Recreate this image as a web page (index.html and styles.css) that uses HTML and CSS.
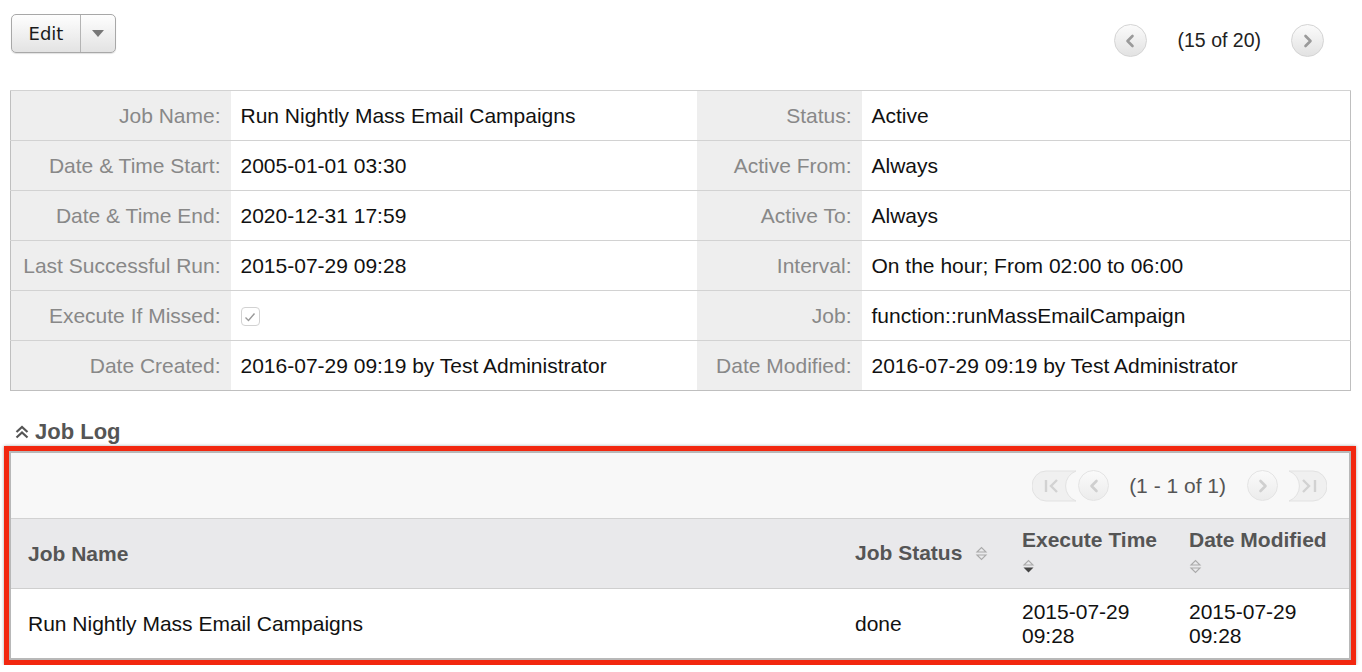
FILE: index.html
```html
<!DOCTYPE html>
<html lang="en">
<head>
	<meta charset="UTF-8">
	<title>Scheduler - Run Nightly Mass Email Campaigns</title>
	<link rel="stylesheet" href="styles.css">
</head>
<body>
	<!--toolbar: action button + record pager-->
	<div class="toolbar">
		<div class="btn-group">
			<span class="btn-main">Edit</span>
			<span class="btn-caret"><span class="caret"></span></span>
		</div>
		<div class="pager">
			<span class="circle-btn">
				<svg width="12" height="14" viewBox="0 0 12 14"><path d="M8.5 2 L3.5 7 L8.5 12" fill="none" stroke="#9a9a9a" stroke-width="2.6" stroke-linecap="round" stroke-linejoin="round"/></svg>
			</span>
			<span class="count">(15 of 20)</span>
			<span class="circle-btn">
				<svg width="12" height="14" viewBox="0 0 12 14"><path d="M3.5 2 L8.5 7 L3.5 12" fill="none" stroke="#9a9a9a" stroke-width="2.6" stroke-linecap="round" stroke-linejoin="round"/></svg>
			</span>
		</div>
	</div>

	<!--detail view-->
	<table class="detail">
		<colgroup>
			<col class="c-label1"><col class="c-value1"><col class="c-label2"><col class="c-value2">
		</colgroup>
		<tr>
			<td class="label">Job Name:</td><td>Run Nightly Mass Email Campaigns</td>
			<td class="label">Status:</td><td>Active</td>
		</tr>
		<tr>
			<td class="label">Date &amp; Time Start:</td><td>2005-01-01 03:30</td>
			<td class="label">Active From:</td><td>Always</td>
		</tr>
		<tr>
			<td class="label">Date &amp; Time End:</td><td>2020-12-31 17:59</td>
			<td class="label">Active To:</td><td>Always</td>
		</tr>
		<tr>
			<td class="label">Last Successful Run:</td><td>2015-07-29 09:28</td>
			<td class="label">Interval:</td><td>On the hour; From 02:00 to 06:00</td>
		</tr>
		<tr>
			<td class="label">Execute If Missed:</td>
			<td><span class="checkbox"><svg width="12" height="10" viewBox="0 0 12 10"><path d="M1.5 5.5 L4.5 8.5 L10.5 1.5" fill="none" stroke="#999" stroke-width="1.4"/></svg></span></td>
			<td class="label">Job:</td><td>function::runMassEmailCampaign</td>
		</tr>
		<tr>
			<td class="label">Date Created:</td><td>2016-07-29 09:19 by Test Administrator</td>
			<td class="label">Date Modified:</td><td>2016-07-29 09:19 by Test Administrator</td>
		</tr>
	</table>

	<!--subpanel-->
	<h3 class="sub-title">
		<svg width="14" height="14" viewBox="0 0 14 14"><path d="M1.5 7 L7 2 L12.5 7 M1.5 12.5 L7 7.5 L12.5 12.5" fill="none" stroke="#555" stroke-width="2.2"/></svg>
		Job Log
	</h3>
	<div class="highlight">
		<div class="subpanel">
			<div class="sub-pager">
				<span class="edge-btn">
					<svg width="46" height="32" viewBox="0 0 46 32"><path d="M14 1 H44 A16 16 0 0 0 44 31 H14 A14 15 0 0 1 14 1 Z" fill="#f0f0f0" stroke="#e2e2e2"/><path d="M14 10 V22 M25 10 L19 16 L25 22" fill="none" stroke="#d2d2d2" stroke-width="2.4"/></svg>
				</span>
				<span class="circle-btn light">
					<svg width="12" height="14" viewBox="0 0 12 14"><path d="M8.5 2 L3.5 7 L8.5 12" fill="none" stroke="#cfcfcf" stroke-width="2.6" stroke-linecap="round" stroke-linejoin="round"/></svg>
				</span>
				<span class="count">(1 - 1 of 1)</span>
				<span class="circle-btn light">
					<svg width="12" height="14" viewBox="0 0 12 14"><path d="M3.5 2 L8.5 7 L3.5 12" fill="none" stroke="#cfcfcf" stroke-width="2.6" stroke-linecap="round" stroke-linejoin="round"/></svg>
				</span>
				<span class="edge-btn last">
					<svg width="40" height="32" viewBox="0 0 40 32"><path d="M2 1 H26 A14 15 0 0 1 26 31 H2 A16 16 0 0 0 2 1 Z" fill="#f0f0f0" stroke="#e2e2e2"/><path d="M16 10 L22 16 L16 22 M28 10 V22" fill="none" stroke="#d2d2d2" stroke-width="2.4"/></svg>
				</span>
			</div>
			<table class="list">
				<colgroup>
					<col class="c-name"><col class="c-status"><col class="c-time"><col class="c-mod">
				</colgroup>
				<tr class="head">
					<th>Job Name</th>
					<th><span class="th-text">Job Status</span> <span class="sort"><svg width="13" height="15" viewBox="0 0 13 15"><path d="M2 6 L6.5 1.5 L11 6 Z M2 9 L6.5 13.5 L11 9 Z" fill="none" stroke="#aaa" stroke-width="1.1"/></svg></span></th>
					<th><span class="th-text">Execute Time</span> <span class="sort"><svg width="13" height="15" viewBox="0 0 13 15"><path d="M2 6 L6.5 1.5 L11 6 Z" fill="none" stroke="#aaa" stroke-width="1.1"/><path d="M1.5 8.5 L6.5 13.5 L11.5 8.5 Z" fill="#444"/></svg></span></th>
					<th><span class="th-text">Date Modified</span> <span class="sort"><svg width="13" height="15" viewBox="0 0 13 15"><path d="M2 6 L6.5 1.5 L11 6 Z M2 9 L6.5 13.5 L11 9 Z" fill="none" stroke="#aaa" stroke-width="1.1"/></svg></span></th>
				</tr>
				<tr>
					<td>Run Nightly Mass Email Campaigns</td>
					<td>done</td>
					<td>2015-07-29<br>09:28</td>
					<td>2015-07-29<br>09:28</td>
				</tr>
			</table>
		</div>
	</div>
</body>
</html>
```

FILE: styles.css
```css
body{
	margin:0;
	font-family:"Liberation Sans",Arial,sans-serif;
	font-size:21px;
	color:#111;
	background:#fff;
}
/*toolbar*/
.toolbar{
	display:flex;
	justify-content:space-between;
	align-items:flex-start;
	height:90px;
	padding:14px 38px 0 11px;
	box-sizing:border-box;
}
.btn-group{
	display:flex;
	height:39px;
	box-sizing:border-box;
	border:1px solid #a8a8a8;
	border-radius:5px;
	background:linear-gradient(#fefefe,#e3e3e3);
	box-shadow:0 1px 1px rgba(0,0,0,.12);
}
.btn-main{
	width:68px;
	display:flex;
	align-items:center;
	justify-content:center;
	font-family:"DejaVu Sans",sans-serif;
	font-size:18px;
	color:#1a1a1a;
	border-right:1px solid #b4b4b4;
}
.btn-caret{
	width:34px;
	display:flex;
	align-items:center;
	justify-content:center;
}
.caret{
	border-left:6px solid transparent;
	border-right:6px solid transparent;
	border-top:7px solid #777;
}
.pager{
	display:flex;
	align-items:center;
	margin-top:10px;
	font-size:19.5px;
	color:#222;
}
.pager .count{
	margin:0 30px 0 31px;
}
.circle-btn{
	width:33px;
	height:33px;
	box-sizing:border-box;
	border-radius:50%;
	border:1px solid #d4d4d4;
	background:linear-gradient(#fbfbfb,#e2e2e2);
	display:flex;
	align-items:center;
	justify-content:center;
}
.circle-btn.light{
	width:31px;
	height:31px;
	border-color:#e4e4e4;
	background:linear-gradient(#fafafa,#ececec);
}
/*detail view*/
.detail{
	margin-left:10px;
	width:1340px;
	border-collapse:collapse;
	table-layout:fixed;
	border:1px solid #bfbfbf;
}
.c-label1{width:220px;}
.c-value1{width:466px;}
.c-label2{width:165px;}
.c-value2{width:489px;}
.detail td{
	height:49px;
	padding:0 10px;
	border-top:1px solid #d2d2d2;
	white-space:nowrap;
	vertical-align:middle;
}
.detail td.label{
	background:#eee;
	color:#888;
	text-align:right;
}
.checkbox{
	display:inline-flex;
	align-items:center;
	justify-content:center;
	width:19px;
	height:19px;
	box-sizing:border-box;
	border:1px solid #d2d2d2;
	border-radius:4px;
	vertical-align:middle;
}
/*subpanel*/
.sub-title{
	display:flex;
	align-items:center;
	gap:6px;
	height:26px;
	margin:28px 0 0;
	padding-left:15px;
	font-size:22px;
	color:#555;
}
.highlight{
	margin:1px 6px 0 4px;
	border:5px solid #f2270f;
	box-shadow:0 0 3px rgba(0,0,0,.35);
}
.subpanel{
	border:2px solid #b8b8b8;
}
.sub-pager{
	display:flex;
	justify-content:flex-end;
	align-items:center;
	height:65px;
	padding-right:22px;
	background:#f8f8f8;
	border-bottom:1px solid #d2d2d2;
	font-size:21px;
	color:#555;
}
.sub-pager .count{
	margin:0 21px 0 20px;
}
.sub-pager .edge-btn{
	display:flex;
}
.sub-pager .edge-btn.last{
	margin-left:9px;
}
.list{
	width:100%;
	border-collapse:collapse;
	table-layout:fixed;
}
.c-name{width:827px;}
.c-status{width:167px;}
.c-time{width:167px;}
.list th,.list td{
	padding:0 10px 0 17px;
	text-align:left;
	vertical-align:middle;
}
.list tr.head th{
	height:69px;
	background:#e9e9eb;
	border-bottom:1px solid #cfcfcf;
	color:#555;
	font-size:21px;
	line-height:26px;
}
.th-text{
	margin-right:7px;
	white-space:nowrap;
}
.sort{
	display:inline-block;
	vertical-align:middle;
}
.list td{
	height:69px;
	line-height:24px;
	color:#111;
}
```
